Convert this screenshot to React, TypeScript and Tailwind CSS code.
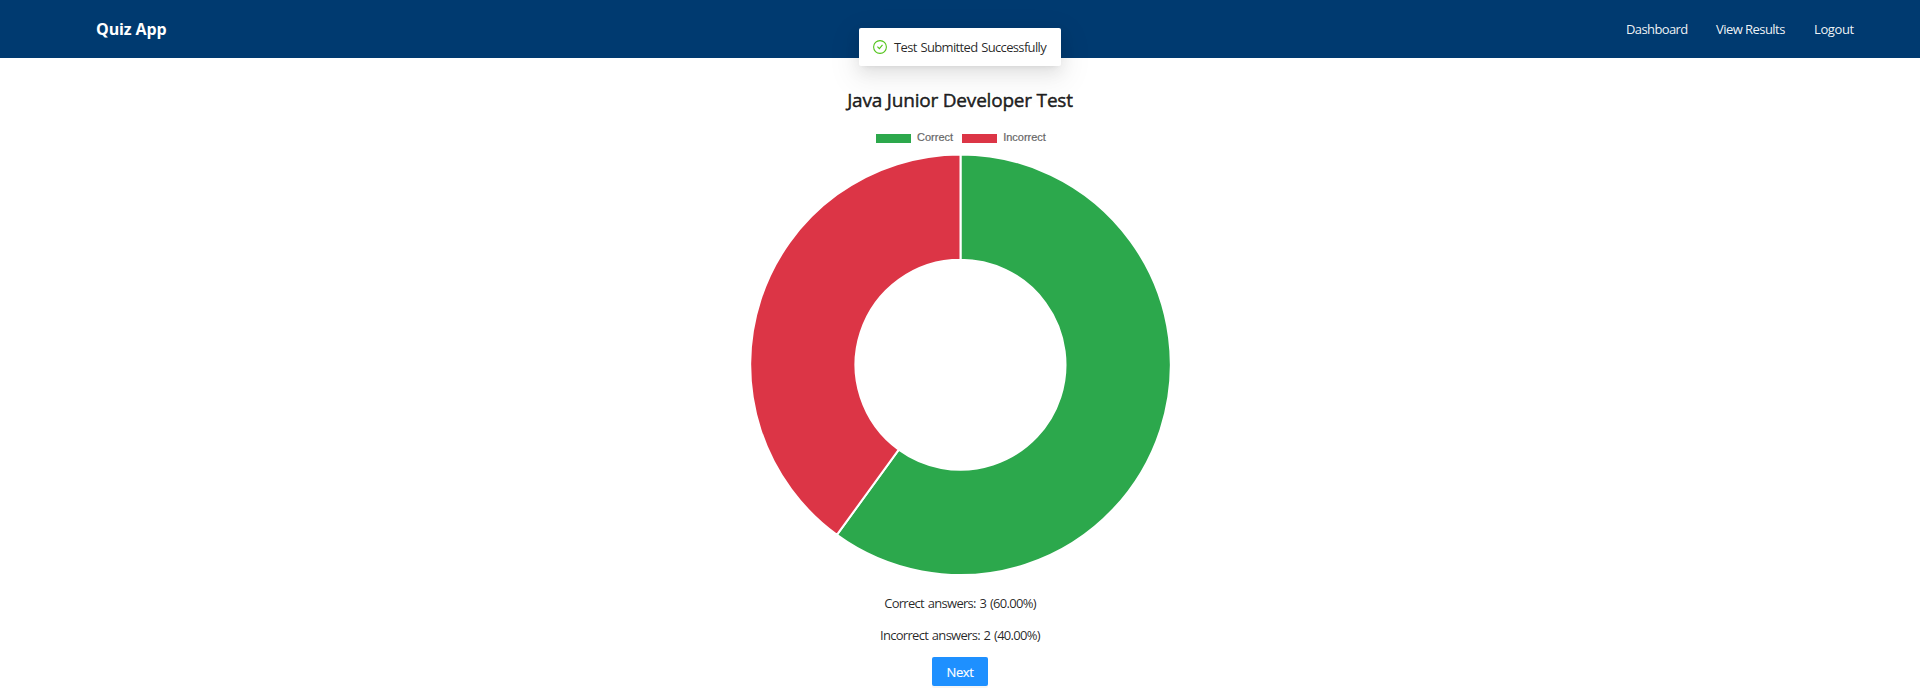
const CENTER = 210;
const OUTER = 210.3;
const INNER = 105;

const segments = [
  { label: 'Correct', count: 3, color: '#2ca84c' },
  { label: 'Incorrect', count: 2, color: '#dc3546' },
];

function point(radius: number, fraction: number) {
  const angle = fraction * Math.PI * 2 - Math.PI / 2;
  return `${CENTER + radius * Math.cos(angle)} ${CENTER + radius * Math.sin(angle)}`;
}

function arcPath(start: number, end: number) {
  const large = end - start > 0.5 ? 1 : 0;
  return `M${point(OUTER, start)}A${OUTER} ${OUTER} 0 ${large} 1 ${point(OUTER, end)}L${point(INNER, end)}A${INNER} ${INNER} 0 ${large} 0 ${point(INNER, start)}Z`;
}

function Doughnut() {
  const total = segments.reduce((sum, s) => sum + s.count, 0);
  let start = 0;
  return (
    <svg width="420" height="420" viewBox="-0.5 0.3 420 420" className="block overflow-visible">
      {segments.map((s) => {
        const from = start;
        start += s.count / total;
        return <path key={s.label} d={arcPath(from, start)} fill={s.color} stroke="#fff" strokeWidth="2" strokeLinejoin="bevel" />;
      })}
    </svg>
  );
}

function Header() {
  return (
    <header className="flex h-[58px] items-center justify-between bg-[#003a70] pr-16 pl-24 text-white">
      <div className="text-base leading-6 font-bold tracking-[-0.1px]">Quiz App</div>
      <nav className="flex gap-7 text-[13px] leading-6 text-white/95">
        <a className="w-[62px] tracking-[-0.6px] whitespace-nowrap">Dashboard</a>
        <a className="w-[70px] tracking-[-0.55px] whitespace-nowrap">View Results</a>
        <a className="w-[42px] tracking-[-0.4px] whitespace-nowrap">Logout</a>
      </nav>
    </header>
  );
}

function Toast() {
  return (
    <div className="absolute top-7 left-[859px] flex h-[38px] w-[202px] items-center rounded-[2px] bg-white pl-[14px] text-[13px] whitespace-nowrap text-black/85 shadow-[0_3px_6px_-4px_rgba(0,0,0,0.12),0_6px_16px_0_rgba(0,0,0,0.08),0_9px_28px_8px_rgba(0,0,0,0.05)]">
      <svg width="14" height="14" viewBox="0 0 14 14" fill="none" stroke="#52c41a" className="mr-[7px] shrink-0">
        <circle cx="7" cy="7" r="6.4" strokeWidth="1.1" />
        <path d="M4.4 6.6 6.4 8.7 9.5 4.8" strokeWidth="1.1" />
      </svg>
      <span className="pt-0.5 tracking-[-0.65px] [word-spacing:1px]">Test Submitted Successfully</span>
    </div>
  );
}

export default function App() {
  return (
    <div className="relative h-[700px] w-full overflow-hidden bg-white font-['Open_Sans','Noto_Sans',sans-serif] text-black/85">
      <Header />
      <Toast />
      <main className="flex flex-col items-center">
        <h1 className="mt-7 h-7 text-[19px] leading-7 font-normal tracking-[-0.2px] [-webkit-text-stroke:0.5px]">Java Junior Developer Test</h1>
        <div className="mt-[17px] flex h-3 items-center gap-[9px] pl-0.5 font-['Liberation_Sans',Arial,sans-serif] text-[11px] leading-3 text-[#666] [-webkit-text-stroke:0.2px]">
          <div className="flex items-center gap-1.5">
            <span className="mt-[3px] h-[9px] w-[35px] bg-[#2ca84c]" />
            <span>Correct</span>
          </div>
          <div className="flex items-center gap-1.5">
            <span className="mt-[3px] h-[9px] w-[35px] bg-[#dc3546]" />
            <span>Incorrect</span>
          </div>
        </div>
        <div className="mt-3">
          <Doughnut />
        </div>
        <p className="mt-[17px] h-[22px] text-[13px] leading-[22px] tracking-[-0.7px] [word-spacing:1px]">Correct answers: 3 (60.00%)</p>
        <p className="mt-[10px] h-[22px] text-[13px] leading-[22px] tracking-[-0.7px] [word-spacing:1px]">Incorrect answers: 2 (40.00%)</p>
        <button className="mt-[11px] h-[29px] w-14 rounded-[2px] bg-[#1e90ff] pt-px text-[13px] leading-[29px] tracking-[-0.4px] text-white shadow-[0_2px_0_rgba(0,0,0,0.04)] [-webkit-text-stroke:0.15px]">Next</button>
      </main>
    </div>
  );
}
